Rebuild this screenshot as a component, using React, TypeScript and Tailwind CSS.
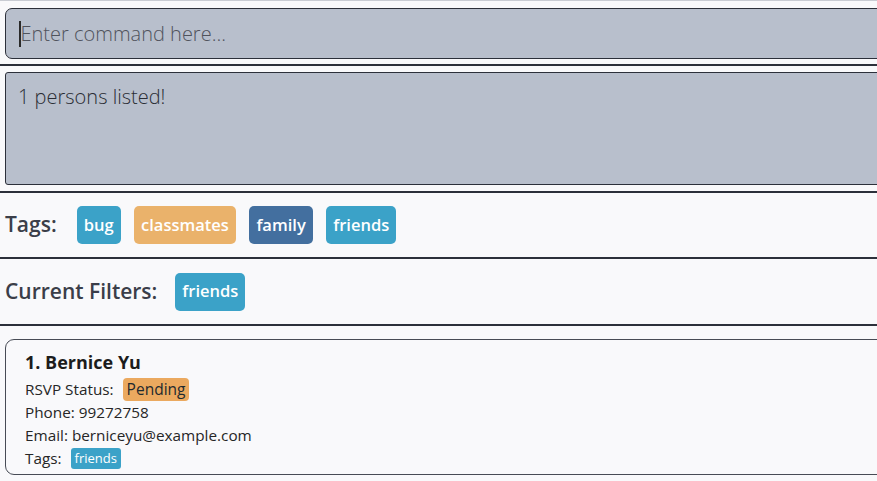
import React from 'react';

const FONT = { fontFamily: '"Open Sans", "Noto Sans", Arial, sans-serif' };

type Tag = { name: string; color: string };

const TAGS: Tag[] = [
  { name: 'bug', color: 'bg-[#3ba2c8]' },
  { name: 'classmates', color: 'bg-[#eab26b]' },
  { name: 'family', color: 'bg-[#436f9f]' },
  { name: 'friends', color: 'bg-[#3ba2c8]' },
];

const Chip: React.FC<{ tag: Tag }> = ({ tag }) => (
  <span
    className={`${tag.color} h-[38px] px-[7px] rounded-[5px] text-white text-[16.5px] font-semibold flex items-center`}
  >
    {tag.name}
  </span>
);

const App: React.FC = () => {
  return (
    <div
      className="w-[877px] h-[481px] overflow-hidden bg-[#f9f9fb] border-t border-[#c9ccd3] flex flex-col"
      style={FONT}
    >
      {/* Command box */}
      <div className="pt-[7px] pl-[5px] pb-[5px] border-b-2 border-[#2c303a]">
        <div className="-mr-4 h-[51px] rounded-[7px] border border-[#2c303a] bg-[#b8bfcc] flex items-center pl-[13px]">
          <span className="w-[1.5px] h-[26px] bg-[#2a2a2a]" />
          <span className="text-[20px] font-light text-[#50535c]">Enter command here...</span>
        </div>
      </div>

      {/* Result display */}
      <div className="pt-[6px] pl-[5px] pb-[6px] border-b-2 border-[#2c303a]">
        <div className="-mr-4 h-[113px] rounded-l-[3px] border border-[#2c303a] bg-[#b8bfcc] pl-[12px] pt-[9px]">
          <span className="text-[20px] font-light text-[#2a2d34]">1 persons listed!</span>
        </div>
      </div>

      {/* Tags */}
      <div className="h-[66px] pl-[5px] flex items-center border-b-2 border-[#2c303a]">
        <span className="text-[21px] font-semibold text-[#3b3e49] mr-[20px]">Tags:</span>
        <div className="flex gap-[13.5px]">
          {TAGS.map((t) => (
            <Chip key={t.name} tag={t} />
          ))}
        </div>
      </div>

      {/* Current filters */}
      <div className="h-[67px] pl-[5px] flex items-center border-b-2 border-[#2c303a]">
        <span className="text-[21px] font-semibold text-[#3b3e49] mr-[18px]">Current Filters:</span>
        <Chip tag={TAGS[3]} />
      </div>

      {/* Person list */}
      <div className="pt-[13px] pl-[5px]">
        <div className="-mr-4 h-[136px] rounded-[9px] border border-[#474b55] bg-[#f9f9fb] pl-[19px] pt-[9px] text-[15.3px] text-[#262626] leading-[23px]">
          <div className="text-[18px] font-bold text-[#1c1c1c] leading-[26px] mb-[3px]">1. Bernice Yu</div>
          <div className="flex items-center">
            RSVP Status:
            <span className="ml-[9px] bg-[#eba95f] text-[#1f2a2e] text-[15.5px] h-[23px] px-[4px] rounded-[4px] flex items-center">
              Pending
            </span>
          </div>
          <div>Phone: 99272758</div>
          <div>Email: berniceyu@example.com</div>
          <div className="flex items-center">
            Tags:
            <span className="ml-[9px] bg-[#3ba2c8] text-white text-[13px] h-[21px] px-[4px] rounded-[3px] flex items-center">
              friends
            </span>
          </div>
        </div>
      </div>
    </div>
  );
};

export default App;
